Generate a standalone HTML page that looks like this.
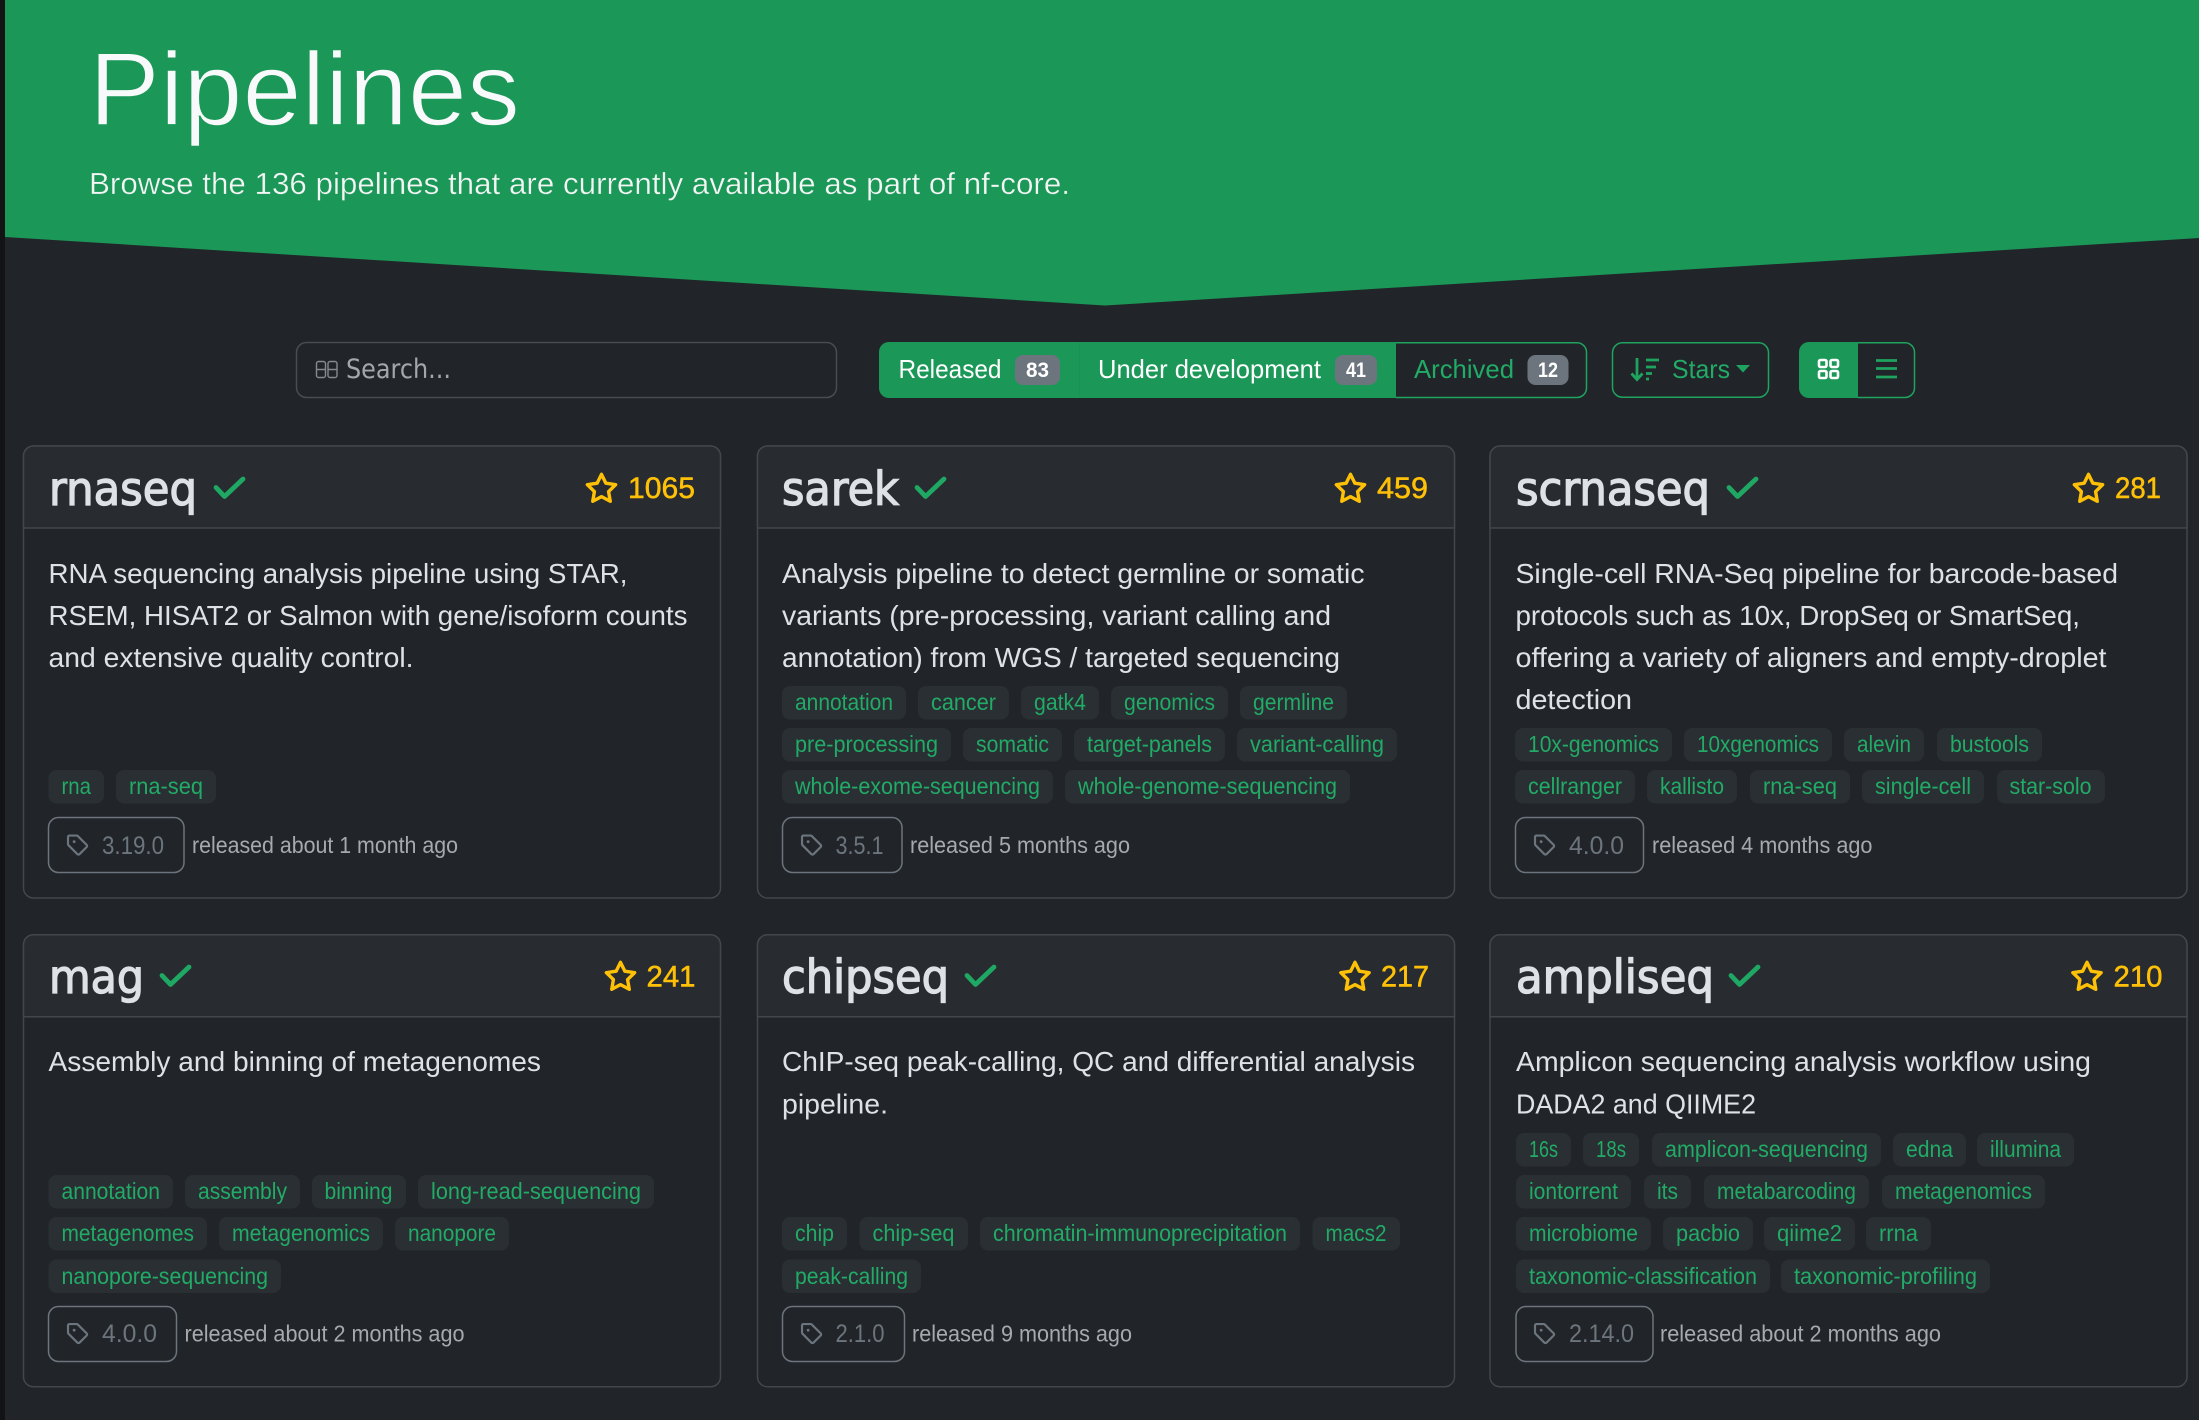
<!DOCTYPE html>
<html lang="en"><head><meta charset="utf-8"><title>Pipelines</title>
<style>
html,body{margin:0;padding:0;background:#212529;width:2199px;height:1420px;overflow:hidden}
svg{display:block}
text{font-family:"Liberation Sans",sans-serif;white-space:pre}
.d{font-size:28px;fill:#dee2e6}
.h{font-family:"DejaVu Sans",sans-serif;font-size:46px;fill:#dee2e6;stroke:#dee2e6;stroke-width:1.3px}
.st{font-size:30px;fill:#ffc107;stroke:#ffc107;stroke-width:.5px}
.t{font-size:23px;fill:#21ab67}
.b{fill:#2a2f33}
.v{font-size:25px;fill:#6c757d}
.r{font-size:23px;fill:#a6aaae}
.bd{font-size:21px;font-weight:700;fill:#fff}
.vb{fill:none;stroke:#6c757d;stroke-width:1.5}
</style></head><body>
<svg xmlns="http://www.w3.org/2000/svg" width="2199" height="1420" viewBox="0 0 2199 1420">
<defs>
<g id="card"><rect x="0" y="0" width="697" height="452" rx="10" fill="#212529" stroke="#43474c" stroke-width="1.5"/><path d="M0,82V10a10,10 0 0 1 10,-10H687a10,10 0 0 1 10,10V82Z" fill="#282b30" stroke="#43474c" stroke-width="1.5"/></g>
<g id="check"><path d="M2,10.5 L10.5,19.5 L29,2" fill="none" stroke="#1fa863" stroke-width="4.8" stroke-linecap="round" stroke-linejoin="round"/></g>
<symbol id="star" viewBox="0 0 24 24"><polygon points="12 2 15.09 8.26 22 9.27 17 14.14 18.18 21.02 12 17.77 5.82 21.02 7 14.14 2 9.27 8.91 8.26 12 2" fill="none" stroke="#ffc107" stroke-width="2.4" stroke-linejoin="round"/></symbol>
<symbol id="tag" viewBox="0 0 16 16"><path fill="#6c757d" d="M1 7.775V2.75C1 1.784 1.784 1 2.75 1h5.025c.464 0 .91.184 1.238.513l6.25 6.25a1.75 1.75 0 0 1 0 2.474l-5.026 5.026a1.75 1.75 0 0 1-2.474 0l-6.25-6.25A1.75 1.75 0 0 1 1 7.775Zm1.5 0c0 .066.026.13.073.177l6.25 6.25a.25.25 0 0 0 .354 0l5.025-5.025a.25.25 0 0 0 0-.354l-6.25-6.25a.25.25 0 0 0-.177-.073H2.75a.25.25 0 0 0-.25.25ZM6 5a1 1 0 1 1 0 2 1 1 0 0 1 0-2Z"/></symbol>
</defs>
<rect width="2199" height="1420" fill="#212529"/>
<rect width="5" height="1420" fill="#121315"/>
<!-- hero -->
<polygon points="5,0 2199,0 2199,238 1105,305.5 5,237" fill="#1b9858"/>
<text x="89" y="125" textLength="431" lengthAdjust="spacingAndGlyphs" style="font-size:104px;fill:#f8f9fa;stroke:#1b9858;stroke-width:1.6px">Pipelines</text>
<text x="89" y="194" textLength="981" lengthAdjust="spacingAndGlyphs" style="font-size:31px;fill:#f4f6f5;stroke:#1b9858;stroke-width:.35px">Browse the 136 pipelines that are currently available as part of nf-core.</text>
<!-- search -->
<rect x="296.5" y="342.5" width="540" height="55" rx="10" fill="#212529" stroke="#494d52" stroke-width="1.5"/>
<g fill="none" stroke="#868a8e" stroke-width="1.4"><rect x="316.5" y="361.5" width="9" height="16" rx="2"/><rect x="328" y="361.5" width="9" height="16" rx="2"/><path d="M316.5,369.5h9M328,369.5h9"/></g>
<text x="346" y="378" textLength="105" lengthAdjust="spacingAndGlyphs" style="font-family:'DejaVu Sans',sans-serif;font-size:27px;fill:#a3a7ab">Search...</text>
<!-- status toggle -->
<path d="M889,342H1396V398H889a10,10 0 0 1 -10,-10V352a10,10 0 0 1 10,-10Z" fill="#1b9858"/>
<path d="M1079.5,342V398" stroke="#1b9156" stroke-width="1"/>
<path d="M1396,342.75H1577a9.5,9.5 0 0 1 9.5,9.5V388a9.5,9.5 0 0 1 -9.5,9.5H1396" fill="none" stroke="#1ea45f" stroke-width="1.5"/>
<text x="898.5" y="378" textLength="103" lengthAdjust="spacingAndGlyphs" style="font-size:26px;fill:#fff">Released</text>
<rect x="1015" y="355" width="45" height="30" rx="8" fill="#6c757d"/><text class="bd" x="1026" y="377" textLength="23" lengthAdjust="spacingAndGlyphs">83</text>
<text x="1098" y="378" textLength="223" lengthAdjust="spacingAndGlyphs" style="font-size:26px;fill:#fff">Under development</text>
<rect x="1335" y="355" width="42" height="30" rx="8" fill="#6c757d"/><text class="bd" x="1346" y="377" textLength="20" lengthAdjust="spacingAndGlyphs">41</text>
<text x="1414" y="378" textLength="100" lengthAdjust="spacingAndGlyphs" style="font-size:26px;fill:#21ab67">Archived</text>
<rect x="1527.5" y="355" width="41" height="30" rx="8" fill="#6c757d"/><text class="bd" x="1538" y="377" textLength="20" lengthAdjust="spacingAndGlyphs">12</text>
<!-- sort -->
<rect x="1612.5" y="342.75" width="156" height="54.5" rx="10" fill="none" stroke="#1ea45f" stroke-width="1.5"/>
<g fill="none" stroke="#1ea45f" stroke-width="2.8"><path d="M1637,358V379M1631.5,373.5L1637,379.5L1642.5,373.5M1646,360H1659M1646,367H1656M1646,373.5H1652M1646,379H1649"/></g>
<text x="1672" y="378" textLength="58" lengthAdjust="spacingAndGlyphs" style="font-size:26px;fill:#21ab67">Stars</text>
<polygon points="1736,365 1750,365 1743,372.5" fill="#1ea45f"/>
<!-- view toggle -->
<path d="M1858,342.75H1905a9.5,9.5 0 0 1 9.5,9.5V388a9.5,9.5 0 0 1 -9.5,9.5H1858" fill="none" stroke="#1ea45f" stroke-width="1.5"/>
<path d="M1809,342H1858V398H1809a10,10 0 0 1 -10,-10V352a10,10 0 0 1 10,-10Z" fill="#1b9858"/>
<g fill="none" stroke="#fff" stroke-width="2.6"><rect x="1819" y="360" width="7.5" height="7" rx="1.5"/><rect x="1830.5" y="360" width="7.5" height="7" rx="1.5"/><rect x="1819" y="371" width="7.5" height="7" rx="1.5"/><rect x="1830.5" y="371" width="7.5" height="7" rx="1.5"/></g>
<path d="M1876,360.5H1897M1876,368.5H1897M1876,377H1897" stroke="#1ea45f" stroke-width="2.8" fill="none"/>
<!-- cards -->
<use href="#card" x="23.5" y="446"/><use href="#card" x="757.5" y="446"/><use href="#card" x="1490" y="446"/>
<use href="#card" x="23.5" y="934.75"/><use href="#card" x="757.5" y="934.75"/><use href="#card" x="1490" y="934.75"/>
<!-- card 1 -->
<text class="h" x="49" y="505" textLength="148" lengthAdjust="spacingAndGlyphs">rnaseq</text><use href="#check" x="214" y="477"/>
<use href="#star" x="584.5" y="471.5" width="34" height="34"/><text class="st" x="628" y="498" textLength="67" lengthAdjust="spacingAndGlyphs">1065</text>
<text class="d" x="48.5" y="583" textLength="579" lengthAdjust="spacingAndGlyphs">RNA sequencing analysis pipeline using STAR,</text>
<text class="d" x="48.5" y="625" textLength="639" lengthAdjust="spacingAndGlyphs">RSEM, HISAT2 or Salmon with gene/isoform counts</text>
<text class="d" x="48.5" y="667" textLength="365" lengthAdjust="spacingAndGlyphs">and extensive quality control.</text>
<rect class="b" x="48.5" y="770" width="55.5" height="33.5" rx="8"/><text class="t" x="61.5" y="794" textLength="29.5" lengthAdjust="spacingAndGlyphs">rna</text>
<rect class="b" x="116" y="770" width="100" height="33.5" rx="8"/><text class="t" x="129" y="794" textLength="74" lengthAdjust="spacingAndGlyphs">rna-seq</text>
<rect class="vb" x="48.5" y="817.5" width="135.5" height="55" rx="10"/><use href="#tag" x="65.5" y="833" width="23" height="23"/><text class="v" x="102" y="854" textLength="62" lengthAdjust="spacingAndGlyphs">3.19.0</text>
<text class="r" x="192" y="853" textLength="266" lengthAdjust="spacingAndGlyphs">released about 1 month ago</text>
<!-- card 2 -->
<text class="h" x="782" y="505" textLength="117" lengthAdjust="spacingAndGlyphs">sarek</text><use href="#check" x="915" y="477"/>
<use href="#star" x="1333.5" y="471.5" width="34" height="34"/><text class="st" x="1377" y="498" textLength="51" lengthAdjust="spacingAndGlyphs">459</text>
<text class="d" x="782" y="583" textLength="582.5" lengthAdjust="spacingAndGlyphs">Analysis pipeline to detect germline or somatic</text>
<text class="d" x="782" y="625" textLength="549" lengthAdjust="spacingAndGlyphs">variants (pre-processing, variant calling and</text>
<text class="d" x="782" y="667" textLength="558" lengthAdjust="spacingAndGlyphs">annotation) from WGS / targeted sequencing</text>
<rect class="b" x="782" y="686" width="124" height="33.5" rx="8"/><text class="t" x="795" y="710" textLength="98" lengthAdjust="spacingAndGlyphs">annotation</text>
<rect class="b" x="918" y="686" width="91" height="33.5" rx="8"/><text class="t" x="931" y="710" textLength="65" lengthAdjust="spacingAndGlyphs">cancer</text>
<rect class="b" x="1021" y="686" width="78" height="33.5" rx="8"/><text class="t" x="1034" y="710" textLength="52" lengthAdjust="spacingAndGlyphs">gatk4</text>
<rect class="b" x="1111" y="686" width="117" height="33.5" rx="8"/><text class="t" x="1124" y="710" textLength="91" lengthAdjust="spacingAndGlyphs">genomics</text>
<rect class="b" x="1240" y="686" width="107" height="33.5" rx="8"/><text class="t" x="1253" y="710" textLength="81" lengthAdjust="spacingAndGlyphs">germline</text>
<rect class="b" x="782" y="728" width="169" height="33.5" rx="8"/><text class="t" x="795" y="752" textLength="143" lengthAdjust="spacingAndGlyphs">pre-processing</text>
<rect class="b" x="963" y="728" width="99" height="33.5" rx="8"/><text class="t" x="976" y="752" textLength="73" lengthAdjust="spacingAndGlyphs">somatic</text>
<rect class="b" x="1074" y="728" width="151" height="33.5" rx="8"/><text class="t" x="1087" y="752" textLength="125" lengthAdjust="spacingAndGlyphs">target-panels</text>
<rect class="b" x="1237" y="728" width="160" height="33.5" rx="8"/><text class="t" x="1250" y="752" textLength="134" lengthAdjust="spacingAndGlyphs">variant-calling</text>
<rect class="b" x="782" y="770" width="271" height="33.5" rx="8"/><text class="t" x="795" y="794" textLength="245" lengthAdjust="spacingAndGlyphs">whole-exome-sequencing</text>
<rect class="b" x="1065" y="770" width="285" height="33.5" rx="8"/><text class="t" x="1078" y="794" textLength="259" lengthAdjust="spacingAndGlyphs">whole-genome-sequencing</text>
<rect class="vb" x="782.5" y="817.5" width="119.5" height="55" rx="10"/><use href="#tag" x="799.5" y="833" width="23" height="23"/><text class="v" x="835.5" y="854" textLength="48" lengthAdjust="spacingAndGlyphs">3.5.1</text>
<text class="r" x="910" y="853" textLength="220" lengthAdjust="spacingAndGlyphs">released 5 months ago</text>
<!-- card 3 -->
<text class="h" x="1516" y="505" textLength="194" lengthAdjust="spacingAndGlyphs">scrnaseq</text><use href="#check" x="1727" y="477"/>
<use href="#star" x="2071.5" y="471.5" width="34" height="34"/><text class="st" x="2115" y="498" textLength="46" lengthAdjust="spacingAndGlyphs">281</text>
<text class="d" x="1515.5" y="583" textLength="602.5" lengthAdjust="spacingAndGlyphs">Single-cell RNA-Seq pipeline for barcode-based</text>
<text class="d" x="1515.5" y="625" textLength="564.5" lengthAdjust="spacingAndGlyphs">protocols such as 10x, DropSeq or SmartSeq,</text>
<text class="d" x="1515.5" y="667" textLength="591" lengthAdjust="spacingAndGlyphs">offering a variety of aligners and empty-droplet</text>
<text class="d" x="1515.5" y="709" textLength="116.5" lengthAdjust="spacingAndGlyphs">detection</text>
<rect class="b" x="1515" y="728" width="157" height="33.5" rx="8"/><text class="t" x="1528" y="752" textLength="131" lengthAdjust="spacingAndGlyphs">10x-genomics</text>
<rect class="b" x="1684" y="728" width="148" height="33.5" rx="8"/><text class="t" x="1697" y="752" textLength="122" lengthAdjust="spacingAndGlyphs">10xgenomics</text>
<rect class="b" x="1844" y="728" width="80" height="33.5" rx="8"/><text class="t" x="1857" y="752" textLength="54" lengthAdjust="spacingAndGlyphs">alevin</text>
<rect class="b" x="1937" y="728" width="105" height="33.5" rx="8"/><text class="t" x="1950" y="752" textLength="79" lengthAdjust="spacingAndGlyphs">bustools</text>
<rect class="b" x="1515" y="770" width="120" height="33.5" rx="8"/><text class="t" x="1528" y="794" textLength="94" lengthAdjust="spacingAndGlyphs">cellranger</text>
<rect class="b" x="1647" y="770" width="90" height="33.5" rx="8"/><text class="t" x="1660" y="794" textLength="64" lengthAdjust="spacingAndGlyphs">kallisto</text>
<rect class="b" x="1750" y="770" width="100" height="33.5" rx="8"/><text class="t" x="1763" y="794" textLength="74" lengthAdjust="spacingAndGlyphs">rna-seq</text>
<rect class="b" x="1862" y="770" width="122" height="33.5" rx="8"/><text class="t" x="1875" y="794" textLength="96" lengthAdjust="spacingAndGlyphs">single-cell</text>
<rect class="b" x="1997" y="770" width="108" height="33.5" rx="8"/><text class="t" x="2009.5" y="794" textLength="82" lengthAdjust="spacingAndGlyphs">star-solo</text>
<rect class="vb" x="1515.5" y="817.5" width="128" height="55" rx="10"/><use href="#tag" x="1532.5" y="833" width="23" height="23"/><text class="v" x="1569" y="854" textLength="55" lengthAdjust="spacingAndGlyphs">4.0.0</text>
<text class="r" x="1652" y="853" textLength="220.5" lengthAdjust="spacingAndGlyphs">released 4 months ago</text>
<!-- card 4 -->
<text class="h" x="49" y="993" textLength="95" lengthAdjust="spacingAndGlyphs">mag</text><use href="#check" x="160" y="965"/>
<use href="#star" x="603.5" y="959.5" width="34" height="34"/><text class="st" x="646.5" y="986.5" textLength="49" lengthAdjust="spacingAndGlyphs">241</text>
<text class="d" x="48.5" y="1071" textLength="492.5" lengthAdjust="spacingAndGlyphs">Assembly and binning of metagenomes</text>
<rect class="b" x="48.5" y="1175" width="124.5" height="33.5" rx="8"/><text class="t" x="61.5" y="1199" textLength="98.5" lengthAdjust="spacingAndGlyphs">annotation</text>
<rect class="b" x="185" y="1175" width="115" height="33.5" rx="8"/><text class="t" x="198" y="1199" textLength="89" lengthAdjust="spacingAndGlyphs">assembly</text>
<rect class="b" x="312" y="1175" width="94" height="33.5" rx="8"/><text class="t" x="324.5" y="1199" textLength="68" lengthAdjust="spacingAndGlyphs">binning</text>
<rect class="b" x="418" y="1175" width="236" height="33.5" rx="8"/><text class="t" x="431" y="1199" textLength="210" lengthAdjust="spacingAndGlyphs">long-read-sequencing</text>
<rect class="b" x="48.5" y="1217" width="158.5" height="33.5" rx="8"/><text class="t" x="61.5" y="1241" textLength="132.5" lengthAdjust="spacingAndGlyphs">metagenomes</text>
<rect class="b" x="219" y="1217" width="164" height="33.5" rx="8"/><text class="t" x="232" y="1241" textLength="138" lengthAdjust="spacingAndGlyphs">metagenomics</text>
<rect class="b" x="395" y="1217" width="114" height="33.5" rx="8"/><text class="t" x="408" y="1241" textLength="88" lengthAdjust="spacingAndGlyphs">nanopore</text>
<rect class="b" x="48.5" y="1259.5" width="232.5" height="33.5" rx="8"/><text class="t" x="61.5" y="1284" textLength="206.5" lengthAdjust="spacingAndGlyphs">nanopore-sequencing</text>
<rect class="vb" x="48.5" y="1306.5" width="128" height="55" rx="10"/><use href="#tag" x="65.5" y="1321.5" width="23" height="23"/><text class="v" x="102" y="1342" textLength="55" lengthAdjust="spacingAndGlyphs">4.0.0</text>
<text class="r" x="184.5" y="1341.5" textLength="280" lengthAdjust="spacingAndGlyphs">released about 2 months ago</text>
<!-- card 5 -->
<text class="h" x="782" y="993" textLength="167" lengthAdjust="spacingAndGlyphs">chipseq</text><use href="#check" x="965" y="965"/>
<use href="#star" x="1338" y="959.5" width="34" height="34"/><text class="st" x="1381" y="986.5" textLength="48" lengthAdjust="spacingAndGlyphs">217</text>
<text class="d" x="782" y="1071" textLength="633" lengthAdjust="spacingAndGlyphs">ChIP-seq peak-calling, QC and differential analysis</text>
<text class="d" x="782" y="1113.5" textLength="106" lengthAdjust="spacingAndGlyphs">pipeline.</text>
<rect class="b" x="782" y="1217" width="65" height="33.5" rx="8"/><text class="t" x="795" y="1241" textLength="39" lengthAdjust="spacingAndGlyphs">chip</text>
<rect class="b" x="859.5" y="1217" width="108.5" height="33.5" rx="8"/><text class="t" x="872.5" y="1241" textLength="82" lengthAdjust="spacingAndGlyphs">chip-seq</text>
<rect class="b" x="980" y="1217" width="320" height="33.5" rx="8"/><text class="t" x="993" y="1241" textLength="294" lengthAdjust="spacingAndGlyphs">chromatin-immunoprecipitation</text>
<rect class="b" x="1312.5" y="1217" width="87.5" height="33.5" rx="8"/><text class="t" x="1325.5" y="1241" textLength="61" lengthAdjust="spacingAndGlyphs">macs2</text>
<rect class="b" x="782" y="1259.5" width="139" height="33.5" rx="8"/><text class="t" x="795" y="1284" textLength="113" lengthAdjust="spacingAndGlyphs">peak-calling</text>
<rect class="vb" x="782.5" y="1306.5" width="122" height="55" rx="10"/><use href="#tag" x="799.5" y="1321.5" width="23" height="23"/><text class="v" x="835.5" y="1342" textLength="49" lengthAdjust="spacingAndGlyphs">2.1.0</text>
<text class="r" x="912" y="1341.5" textLength="220" lengthAdjust="spacingAndGlyphs">released 9 months ago</text>
<!-- card 6 -->
<text class="h" x="1516" y="993" textLength="198" lengthAdjust="spacingAndGlyphs">ampliseq</text><use href="#check" x="1729" y="965"/>
<use href="#star" x="2070" y="959.5" width="34" height="34"/><text class="st" x="2113.5" y="986.5" textLength="49" lengthAdjust="spacingAndGlyphs">210</text>
<text class="d" x="1516" y="1071" textLength="575" lengthAdjust="spacingAndGlyphs">Amplicon sequencing analysis workflow using</text>
<text class="d" x="1516" y="1113.5" textLength="240" lengthAdjust="spacingAndGlyphs">DADA2 and QIIME2</text>
<rect class="b" x="1516" y="1133" width="55" height="33.5" rx="8"/><text class="t" x="1529" y="1157" textLength="29" lengthAdjust="spacingAndGlyphs">16s</text>
<rect class="b" x="1583" y="1133" width="56" height="33.5" rx="8"/><text class="t" x="1596" y="1157" textLength="30" lengthAdjust="spacingAndGlyphs">18s</text>
<rect class="b" x="1652" y="1133" width="229" height="33.5" rx="8"/><text class="t" x="1665" y="1157" textLength="203" lengthAdjust="spacingAndGlyphs">amplicon-sequencing</text>
<rect class="b" x="1893" y="1133" width="73" height="33.5" rx="8"/><text class="t" x="1906" y="1157" textLength="47" lengthAdjust="spacingAndGlyphs">edna</text>
<rect class="b" x="1977" y="1133" width="97" height="33.5" rx="8"/><text class="t" x="1990" y="1157" textLength="71" lengthAdjust="spacingAndGlyphs">illumina</text>
<rect class="b" x="1516" y="1175" width="115" height="33.5" rx="8"/><text class="t" x="1529" y="1199" textLength="89" lengthAdjust="spacingAndGlyphs">iontorrent</text>
<rect class="b" x="1644" y="1175" width="47" height="33.5" rx="8"/><text class="t" x="1657" y="1199" textLength="21" lengthAdjust="spacingAndGlyphs">its</text>
<rect class="b" x="1704" y="1175" width="165" height="33.5" rx="8"/><text class="t" x="1717" y="1199" textLength="139" lengthAdjust="spacingAndGlyphs">metabarcoding</text>
<rect class="b" x="1882" y="1175" width="163" height="33.5" rx="8"/><text class="t" x="1895" y="1199" textLength="137" lengthAdjust="spacingAndGlyphs">metagenomics</text>
<rect class="b" x="1516" y="1217" width="135" height="33.5" rx="8"/><text class="t" x="1529" y="1241" textLength="109" lengthAdjust="spacingAndGlyphs">microbiome</text>
<rect class="b" x="1663" y="1217" width="90" height="33.5" rx="8"/><text class="t" x="1676" y="1241" textLength="64" lengthAdjust="spacingAndGlyphs">pacbio</text>
<rect class="b" x="1764" y="1217" width="91" height="33.5" rx="8"/><text class="t" x="1777" y="1241" textLength="65" lengthAdjust="spacingAndGlyphs">qiime2</text>
<rect class="b" x="1866" y="1217" width="65" height="33.5" rx="8"/><text class="t" x="1879" y="1241" textLength="39" lengthAdjust="spacingAndGlyphs">rrna</text>
<rect class="b" x="1516" y="1259.5" width="254" height="33.5" rx="8"/><text class="t" x="1529" y="1284" textLength="228" lengthAdjust="spacingAndGlyphs">taxonomic-classification</text>
<rect class="b" x="1781" y="1259.5" width="209" height="33.5" rx="8"/><text class="t" x="1794" y="1284" textLength="183" lengthAdjust="spacingAndGlyphs">taxonomic-profiling</text>
<rect class="vb" x="1516" y="1306.5" width="137" height="55" rx="10"/><use href="#tag" x="1532.5" y="1321.5" width="23" height="23"/><text class="v" x="1569" y="1342" textLength="65" lengthAdjust="spacingAndGlyphs">2.14.0</text>
<text class="r" x="1660" y="1341.5" textLength="281" lengthAdjust="spacingAndGlyphs">released about 2 months ago</text>
</svg>
</body></html>
